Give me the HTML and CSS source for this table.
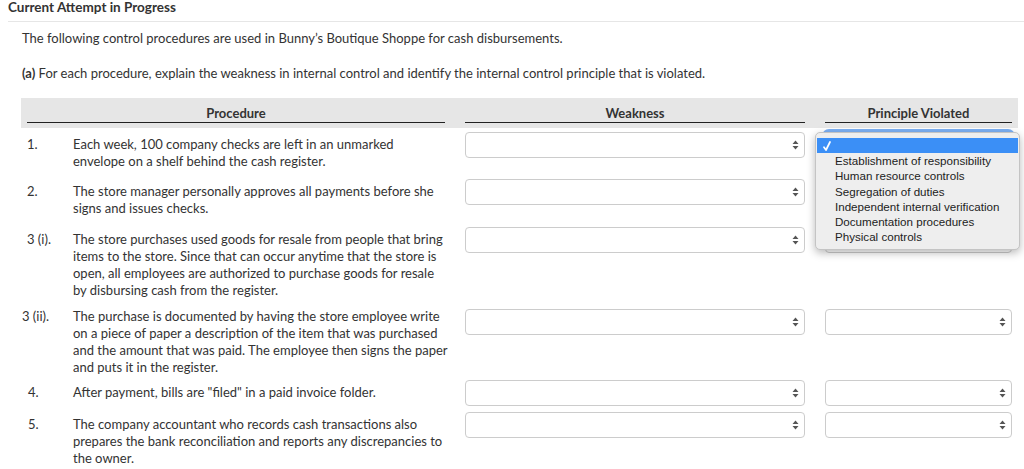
FILE: index.html
```html
<!DOCTYPE html>
<html lang="en">
<head>
<meta charset="utf-8">
<title>Current Attempt in Progress</title>
<link rel="stylesheet" href="styles.css">
</head>
<body>
<div class="page">
  <h1 class="title">Current Attempt in Progress</h1>
  <div class="content">
    <p class="intro">The following control procedures are used in Bunny’s Boutique Shoppe for cash disbursements.</p>
    <p class="intro intro--question"><b>(a)</b> For each procedure, explain the weakness in internal control and identify the internal control principle that is violated.</p>

    <div class="table">
      <div class="thead">
        <div class="th">Procedure</div>
        <div class="th">Weakness</div>
        <div class="th">Principle Violated</div>
      </div>

      <div class="rows">
        <div class="row">
          <div class="proc"><span class="num">1.</span><span class="desc">Each week, 100 company checks are left in an unmarked envelope on a shelf behind the cash register.</span></div>
          <div class="cell"><div class="select"><svg class="arrows" width="7" height="10" viewBox="0 0 7 10"><path d="M3.5 0.5 L6.5 4 L0.5 4 Z M0.5 6 L6.5 6 L3.5 9.5 Z" fill="#555"/></svg></div></div>
          <div class="cell cell--menu">
            <div class="select select--focus"><svg class="arrows" width="7" height="10" viewBox="0 0 7 10"><path d="M3.5 0.5 L6.5 4 L0.5 4 Z M0.5 6 L6.5 6 L3.5 9.5 Z" fill="#555"/></svg></div>
            <div class="menu">
              <div class="menu-item menu-item--active"><svg class="check" width="8" height="10" viewBox="0 0 8 10"><path d="M1 6.2 L3 9 L7 1" fill="none" stroke="#ffffff" stroke-width="1.7" stroke-linecap="round" stroke-linejoin="round"/></svg></div>
              <div class="menu-item">Establishment of responsibility</div>
              <div class="menu-item">Human resource controls</div>
              <div class="menu-item">Segregation of duties</div>
              <div class="menu-item">Independent internal verification</div>
              <div class="menu-item">Documentation procedures</div>
              <div class="menu-item">Physical controls</div>
            </div>
          </div>
        </div>

        <div class="row row--loose">
          <div class="proc"><span class="num">2.</span><span class="desc">The store manager personally approves all payments before she signs and issues checks.</span></div>
          <div class="cell"><div class="select"><svg class="arrows" width="7" height="10" viewBox="0 0 7 10"><path d="M3.5 0.5 L6.5 4 L0.5 4 Z M0.5 6 L6.5 6 L3.5 9.5 Z" fill="#555"/></svg></div></div>
          <div class="cell"><div class="select"><svg class="arrows" width="7" height="10" viewBox="0 0 7 10"><path d="M3.5 0.5 L6.5 4 L0.5 4 Z M0.5 6 L6.5 6 L3.5 9.5 Z" fill="#555"/></svg></div></div>
        </div>

        <div class="row row--loose">
          <div class="proc"><span class="num">3 (i).</span><span class="desc">The store purchases used goods for resale from people that bring items to the store. Since that can occur anytime that the store is open, all employees are authorized to purchase goods for resale by disbursing cash from the register.</span></div>
          <div class="cell"><div class="select"><svg class="arrows" width="7" height="10" viewBox="0 0 7 10"><path d="M3.5 0.5 L6.5 4 L0.5 4 Z M0.5 6 L6.5 6 L3.5 9.5 Z" fill="#555"/></svg></div></div>
          <div class="cell"><div class="select"><svg class="arrows" width="7" height="10" viewBox="0 0 7 10"><path d="M3.5 0.5 L6.5 4 L0.5 4 Z M0.5 6 L6.5 6 L3.5 9.5 Z" fill="#555"/></svg></div></div>
        </div>

        <div class="row row--tight">
          <div class="proc proc--raised"><span class="num num--wide">3 (ii).</span><span class="desc">The purchase is documented by having the store employee write on a piece of paper a description of the item that was purchased and the amount that was paid. The employee then signs the paper and puts it in the register.</span></div>
          <div class="cell"><div class="select"><svg class="arrows" width="7" height="10" viewBox="0 0 7 10"><path d="M3.5 0.5 L6.5 4 L0.5 4 Z M0.5 6 L6.5 6 L3.5 9.5 Z" fill="#555"/></svg></div></div>
          <div class="cell"><div class="select"><svg class="arrows" width="7" height="10" viewBox="0 0 7 10"><path d="M3.5 0.5 L6.5 4 L0.5 4 Z M0.5 6 L6.5 6 L3.5 9.5 Z" fill="#555"/></svg></div></div>
        </div>

        <div class="row row--short">
          <div class="proc"><span class="num num--narrow">4.</span><span class="desc">After payment, bills are "filed" in a paid invoice folder.</span></div>
          <div class="cell"><div class="select"><svg class="arrows" width="7" height="10" viewBox="0 0 7 10"><path d="M3.5 0.5 L6.5 4 L0.5 4 Z M0.5 6 L6.5 6 L3.5 9.5 Z" fill="#555"/></svg></div></div>
          <div class="cell"><div class="select"><svg class="arrows" width="7" height="10" viewBox="0 0 7 10"><path d="M3.5 0.5 L6.5 4 L0.5 4 Z M0.5 6 L6.5 6 L3.5 9.5 Z" fill="#555"/></svg></div></div>
        </div>

        <div class="row">
          <div class="proc"><span class="num num--narrow">5.</span><span class="desc">The company accountant who records cash transactions also prepares the bank reconciliation and reports any discrepancies to the owner.</span></div>
          <div class="cell"><div class="select"><svg class="arrows" width="7" height="10" viewBox="0 0 7 10"><path d="M3.5 0.5 L6.5 4 L0.5 4 Z M0.5 6 L6.5 6 L3.5 9.5 Z" fill="#555"/></svg></div></div>
          <div class="cell"><div class="select"><svg class="arrows" width="7" height="10" viewBox="0 0 7 10"><path d="M3.5 0.5 L6.5 4 L0.5 4 Z M0.5 6 L6.5 6 L3.5 9.5 Z" fill="#555"/></svg></div></div>
        </div>
      </div>
    </div>
  </div>
</div>
</body>
</html>
```
FILE: styles.css
```css
* { box-sizing: border-box; }

html, body {
  margin: 0;
  background: #ffffff;
}

body {
  font-family: Lato, "Open Sans", sans-serif;
  font-size: 13px;
  color: #333333;
  overflow: hidden;
}

.page {
  padding-left: 8px;
}

.title {
  margin: 0;
  font-size: 13.5px;
  font-weight: 700;
  line-height: 15px;
  color: #333333;
  padding-bottom: 6px;
  border-bottom: 1px solid #e6e6e6;
}

.content {
  padding-left: 13px;
}

.intro {
  margin: 8px 0 0;
  padding-left: 1px;
  line-height: 17px;
}

.intro--question {
  margin-top: 18px;
}

.table {
  width: 997px;
  margin-top: 16px;
}

.thead {
  display: grid;
  grid-template-columns: 418px 340px 187px;
  column-gap: 20px;
  background: #e6e6e6;
  padding: 7px 6px 5px;
}

.th {
  text-align: center;
  font-weight: 700;
  line-height: 17px;
  border-bottom: 1px solid #222222;
}

.rows {
  padding: 4px 6px 0;
}

.row {
  display: grid;
  grid-template-columns: 418px 340px 187px;
  column-gap: 20px;
  align-items: start;
  padding-bottom: 9px;
}

.row--loose { padding-bottom: 10px; }
.row--tight { padding-bottom: 4px; }
.row--short { padding-bottom: 6px; }

.proc {
  display: flex;
  padding-top: 4px;
  line-height: 17px;
}

.proc--raised {
  padding-top: 0;
  margin-top: -1px;
}

.num {
  flex: none;
  width: 46px;
  white-space: nowrap;
}

.num--wide {
  margin-left: -5px;
  width: 51px;
}

.num--narrow {
  padding-left: 1px;
}

.desc {
  flex: 1;
  margin-right: -3px;
}

.cell {
  position: relative;
}

.select {
  height: 26px;
  border: 1px solid #cccccc;
  border-radius: 4px;
  background: #ffffff;
  display: flex;
  align-items: center;
  justify-content: flex-end;
  padding-right: 5px;
}

.select--focus {
  box-shadow: 0 0 0 3px rgba(80, 150, 240, 0.75);
}

.arrows {
  display: block;
}

.menu {
  position: absolute;
  left: -10px;
  top: 0;
  width: 205px;
  padding: 5px 1px 4px;
  background: #eeeeee;
  border: 1px solid #c4c4c4;
  border-radius: 5px;
  box-shadow: 0 3px 9px rgba(0, 0, 0, 0.28);
  font-family: "Liberation Sans", Arial, sans-serif;
  font-size: 11.6px;
  color: #222222;
  z-index: 2;
}

.menu-item {
  height: 15.3px;
  line-height: 15.3px;
  padding-left: 18px;
  white-space: nowrap;
}

.menu-item--active {
  height: 15px;
  background: #3b8ff6;
  padding-left: 6px;
  display: flex;
  align-items: center;
}

.check {
  display: block;
}
```
